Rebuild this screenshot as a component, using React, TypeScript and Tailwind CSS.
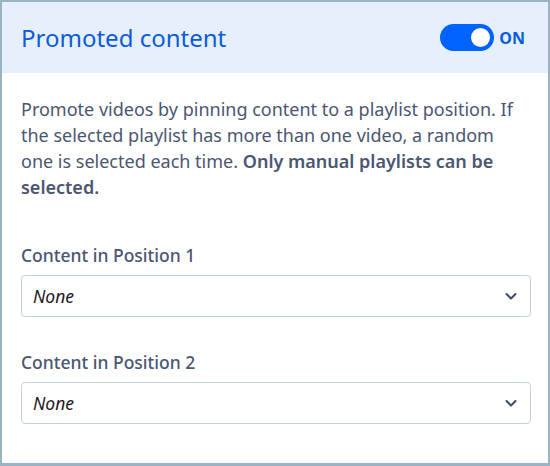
import React from "react";

function Chevron() {
  return (
    <svg width="14" height="14" viewBox="0 0 14 14" fill="none">
      <path d="M2.5 5l4.5 4.5L11.5 5" stroke="#3d4a66" strokeWidth="2" strokeLinecap="round" strokeLinejoin="round" />
    </svg>
  );
}

function Select({ label }: { label: string }) {
  return (
    <div className="flex flex-col">
      <div className="text-[17.5px] font-medium text-[#4a5672] leading-[24px] mb-[8px]">{label}</div>
      <div className="h-[42px] rounded-[4px] border border-[#c6d0dc] bg-white flex items-center justify-between pl-[11px] pr-[12px]">
        <span className="italic text-[17.5px] text-[#1c1c1c]">None</span>
        <Chevron />
      </div>
    </div>
  );
}

export default function App() {
  return (
    <div
      className="w-[550px] h-[466px] border-[2px] border-b-[3px] border-[#9ab4c3] bg-white flex flex-col"
      style={{ fontFamily: '"Noto Sans", sans-serif' }}
    >
      <div className="h-[71px] bg-[#e6f0fd] flex items-center justify-between pl-[19px] pr-[23px] shrink-0">
        <div className="text-[24px] text-[#0d5bd8] leading-none">Promoted content</div>
        <div className="flex items-center gap-[5px]">
          <div className="w-[54px] h-[27px] rounded-full bg-[#0062ff] flex items-center justify-end p-[2px]">
            <div className="w-[23px] h-[23px] rounded-full bg-white border-[2px] border-[#0062ff] box-border" />
          </div>
          <span className="text-[16px] font-bold text-[#0a5ce0]">ON</span>
        </div>
      </div>
      <div className="pl-[19px] pr-[17px] pt-[23px] flex flex-col">
        <p className="text-[18px] leading-[26px] text-[#4a5672] pr-[2px]">
          Promote videos by pinning content to a playlist position. If the selected playlist has more than one video, a random one is selected each time.{" "}
          <span className="font-semibold">Only manual playlists can be selected.</span>
        </p>
        <div className="mt-[43px] flex flex-col gap-[33px]">
          <Select label="Content in Position 1" />
          <Select label="Content in Position 2" />
        </div>
      </div>
    </div>
  );
}
